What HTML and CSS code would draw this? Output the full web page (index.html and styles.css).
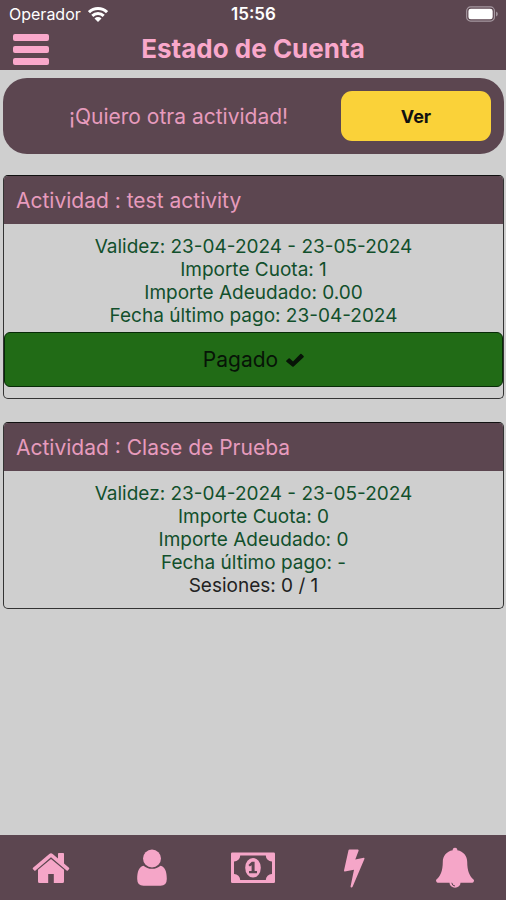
FILE: index.html
```html
<!DOCTYPE html>
<html lang="es">
<head>
  <meta charset="UTF-8">
  <meta name="viewport" content="width=device-width, initial-scale=1.0">
  <title>Estado de Cuenta</title>
  <link rel="stylesheet" href="styles.css">
</head>
<body>
  <!-- Barra de estado -->
  <div class="status-bar">
    <div class="carrier">
      <span>Operador</span>
      <svg class="wifi" viewBox="0 0 20 15" aria-hidden="true">
        <path d="M1 5.2a13 13 0 0 1 18 0" />
        <path d="M4.3 8.8a8.2 8.2 0 0 1 11.4 0" />
        <path class="wifi-dot" d="M10 15 6.500 11.500a4.900 4.900 0 0 1 7 0z" />
      </svg>
    </div>
    <span class="clock">15:56</span>
    <div class="battery-box">
      <svg class="battery" viewBox="0 0 33 16" aria-hidden="true">
        <rect x="0.7" y="0.7" width="28.6" height="14.6" rx="4" fill="none" stroke="#a598a0" stroke-width="1.2" />
        <rect x="2.5" y="2.5" width="25" height="11" rx="2.5" fill="#fff" />
        <path d="M31 5.5q1.8.8 1.8 2.5T31 10.5z" fill="#a598a0" />
      </svg>
    </div>
  </div>

  <!-- Cabecera -->
  <header class="header">
    <button class="menu-btn" type="button" aria-label="Menú">
      <span class="bar"></span>
      <span class="bar"></span>
      <span class="bar"></span>
    </button>
    <h1>Estado de Cuenta</h1>
  </header>

  <main class="content">
    <section class="promo">
      <p>¡Quiero otra actividad!</p>
      <button class="promo-btn" type="button">Ver</button>
    </section>

    <section class="card">
      <h2>Actividad : test activity</h2>
      <div class="card-body">
        <p>Validez: 23-04-2024 - 23-05-2024</p>
        <p>Importe Cuota: 1</p>
        <p>Importe Adeudado: 0.00</p>
        <p>Fecha último pago: 23-04-2024</p>
      </div>
      <div class="paid">
        <span>Pagado</span>
        <svg class="check" viewBox="0 0 18 14" aria-hidden="true">
          <path d="M.4 7.6 2.6 5.4q.6-.5 1.2 0L7 8.5 14.3 1q.6-.6 1.2 0l2.1 2q.5.6 0 1.2L7.700 13.500q-.7.6-1.4 0L.4 8.8q-.5-.6 0-1.2z" />
        </svg>
      </div>
    </section>

    <section class="card">
      <h2>Actividad : Clase de Prueba</h2>
      <div class="card-body">
        <p>Validez: 23-04-2024 - 23-05-2024</p>
        <p>Importe Cuota: 0</p>
        <p>Importe Adeudado: 0</p>
        <p>Fecha último pago: -</p>
        <p class="sessions">Sesiones: 0 / 1</p>
      </div>
    </section>
  </main>

  <!-- Navegación inferior -->
  <nav class="tab-bar">
    <a href="#" aria-label="Inicio">
      <svg viewBox="0 0 44 40" aria-hidden="true">
        <path d="M22 11 35 21.700V33.500a1.500 1.500 0 0 1-1.500 1.500H24.800V26h-5.600v9h-8.700A1.500 1.500 0 0 1 9 33.500V21.700z" />
        <path d="M4 19.800 20.300 6q1.700-1.300 3.400 0L29 10.400V5.800q0-.8.8-.8h4.400q.8 0 .8.800v9.700l5 4.300q.6.600.1 1.200l-1.200 1.400q-.6.600-1.300.1L22 9.200 6.500 22.500q-.7.500-1.300-.1L3.900 21q-.5-.6.100-1.200z" />
      </svg>
    </a>
    <a href="#" aria-label="Perfil">
      <svg viewBox="0 0 44 40" aria-hidden="true">
        <circle cx="22" cy="10.500" r="9" />
        <path d="M13.500 17.700Q17 20.800 22 20.800t8.500-3.100C35 18.800 36.800 23.500 36.800 31q0 6.800-6.300 6.800h-17q-6.300 0-6.300-6.800C7.200 23.500 9 18.800 13.500 17.700z" />
      </svg>
    </a>
    <a href="#" aria-label="Pagos">
      <svg viewBox="0 0 44 40" aria-hidden="true">
        <path fill-rule="evenodd" d="M1.300 4.500h41.400q1.300 0 1.300 1.300v27.900q0 1.300-1.300 1.300H1.300Q0 35 0 33.700V5.800Q0 4.500 1.300 4.500zM9.200 7.500A6 6 0 0 1 3 13.500v12.500a6 6 0 0 1 6.200 6h25.600a6 6 0 0 1 6.200-6V13.500a6 6 0 0 1-6.200-6z" />
        <ellipse cx="22" cy="19.700" rx="7.800" ry="9.800" />
        <path class="cutout" d="M20.800 13.800h2.800v9.200h2.400v2.200h-8v-2.200h2.600v-5.700l-1.700 1.300-1.500-1.700z" />
      </svg>
    </a>
    <a href="#" aria-label="Actividad">
      <svg viewBox="0 0 44 40" aria-hidden="true">
        <path d="M17.500 1.500h8.400q1 .2.700 1.200L23.300 11.500l8.500-1.700q1 0 .6 1.100L20.600 38.800q-.5.900-1.500.7-.7-.4-.5-1.300L22 21.700l-9.200 1.900q-1 0-.8-1.100L16.500 2.300q.2-.7 1-.8z" />
      </svg>
    </a>
    <a href="#" aria-label="Notificaciones">
      <svg viewBox="0 0 44 40" aria-hidden="true">
        <path d="M22-.3a2.300 2.300 0 0 1 2.300 2.500c6.200 1.200 9.900 5.700 9.900 11.500 0 9.300 2.400 14.600 6.800 18.200q.2 2.900-2.900 2.900H27.500a5.500 5 0 0 1-11 0H5.900Q3 34.800 3 31.900c4.400-3.600 6.800-8.900 6.800-18.200 0-5.800 3.700-10.300 9.900-11.500A2.300 2.300 0 0 1 22-.3z" />
        <path class="ring" d="M18.800 34.800q.3 3 3.200 3.200" />
      </svg>
    </a>
  </nav>
</body>
</html>
```
FILE: styles.css
```css
* { box-sizing: border-box; }
body {
  margin: 0;
  min-height: 100vh;
  display: flex;
  flex-direction: column;
  font-family: Inter, "Liberation Sans", sans-serif;
  background-color: #cfcfcf;
  color: #111;
}
h1, h2, p {
  margin: 0;
}
button {
  border: none;
  font-family: inherit;
  cursor: pointer;
}

/* Barra de estado */
.status-bar {
  display: flex;
  align-items: center;
  height: 28px;
  padding: 0 8px 0 9px;
  background-color: #5c4650;
  color: #fff;
  font-size: 16px;
}
.carrier, .battery-box {
  flex: 1;
  display: flex;
  align-items: center;
}
.carrier {
  gap: 7px;
}
.battery-box {
  justify-content: flex-end;
}
.clock {
  font-size: 17px;
  font-weight: 600;
}
.wifi {
  width: 20px;
  height: 15px;
  fill: none;
  stroke: #fff;
  stroke-width: 3;
}
.wifi .wifi-dot {
  fill: #fff;
  stroke: none;
}
.battery {
  width: 32px;
  height: 16px;
}

/* Cabecera */
.header {
  display: grid;
  grid-template-columns: 36px 1fr 36px;
  align-items: center;
  height: 42px;
  padding: 0 13px;
  background-color: #5c4650;
}
.header h1 {
  text-align: center;
  font-size: 26px;
  line-height: 32px;
  font-weight: 700;
  color: #f9a8cb;
}
.menu-btn {
  display: flex;
  flex-direction: column;
  gap: 5px;
  width: 36px;
  padding: 0;
  background: none;
}
.menu-btn .bar {
  height: 7px;
  border-radius: 2px;
  background-color: #f9a8cb;
}

.content {
  flex: 1;
  padding: 8px 2px 8px 3px;
}
.promo {
  display: flex;
  align-items: center;
  height: 76px;
  padding: 0 13px;
  margin-bottom: 21px;
  border-radius: 24px;
  background-color: #5c4650;
}
.promo p {
  flex: 1;
  text-align: center;
  font-size: 21px;
  color: #e79bbd;
}
.promo-btn {
  width: 30%;
  height: 50px;
  min-width: 150px;
  border-radius: 11px;
  background-color: #fad239;
  color: #111;
  font-size: 18px;
  font-weight: 700;
}

/* Tarjetas */
.card {
  margin-bottom: 23px;
  border: 1px solid #333;
  border-top-color: #111;
  border-radius: 5px;
  overflow: hidden;
}
.card h2 {
  padding: 10px 12px 9px;
  background-color: #5c4650;
  color: #e79bbd;
  font-size: 21px;
  line-height: 29px;
  font-weight: 400;
}
.card-body {
  padding: 11px 12px;
  text-align: center;
  font-size: 19px;
  line-height: 23px;
  color: #12502c;
}
.card-body .sessions {
  color: #222;
}
.paid {
  display: flex;
  justify-content: center;
  align-items: center;
  gap: 8px;
  height: 55px;
  margin: -6px 0 11px;
  border: 1px solid #072a07;
  border-radius: 6px;
  background-color: #216b16;
  color: #071407;
  font-size: 21px;
}
.check {
  width: 18px;
  height: 14px;
  fill: #071407;
}

/* Navegación inferior */
.tab-bar {
  display: flex;
  height: 65px;
  background-color: #5c4650;
}
.tab-bar a {
  flex: 1;
  display: flex;
  justify-content: center;
  align-items: center;
}
.tab-bar svg {
  width: 44px;
  height: 40px;
  fill: #f5a6c8;
  overflow: visible;
}
.tab-bar .cutout {
  fill: #5c4650;
}
.tab-bar .ring {
  fill: none;
  stroke: #5c4650;
  stroke-width: 1;
}
```
